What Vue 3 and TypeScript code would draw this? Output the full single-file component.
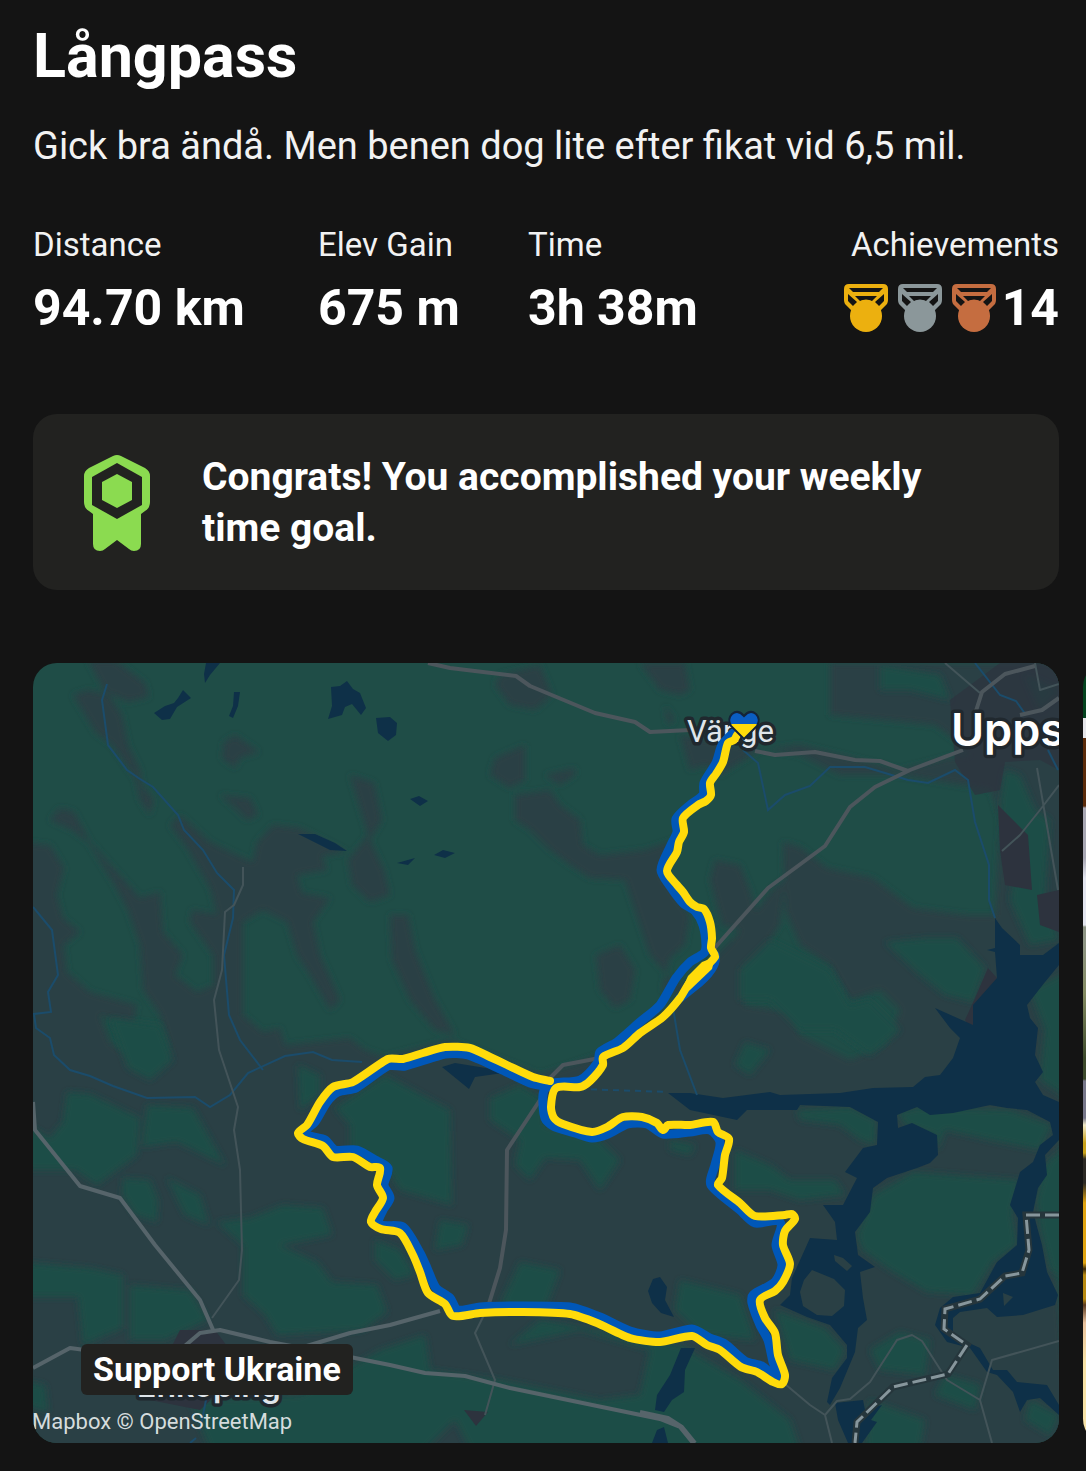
<script setup lang="ts">
interface Stat {
  label: string
  value: string
}

interface Medal {
  name: string
  color: string
}

const stats: Stat[] = [
  { label: 'Distance', value: '94.70 km' },
  { label: 'Elev Gain', value: '675 m' },
  { label: 'Time', value: '3h 38m' },
]

const medals: Medal[] = [
  { name: 'gold', color: '#ecb00f' },
  { name: 'silver', color: '#8b979a' },
  { name: 'bronze', color: '#c56d40' },
]

// Turns a list of "x,y" points into a gently rounded curve through all of them.
function smooth(list: string): string {
  const points = list.split(' ').map((pair) => pair.split(',').map(Number))
  let path = `M${points[0][0]} ${points[0][1]}`
  for (let i = 0; i < points.length - 1; i++) {
    const before = points[Math.max(i - 1, 0)]
    const from = points[i]
    const to = points[i + 1]
    const after = points[Math.min(i + 2, points.length - 1)]
    const reach = Math.min(Math.hypot(to[0] - from[0], to[1] - from[1]) / 4, 7)
    const unit = (a: number[], b: number[]): number[] => {
      const length = Math.hypot(b[0] - a[0], b[1] - a[1]) || 1
      return [(b[0] - a[0]) / length, (b[1] - a[1]) / length]
    }
    const out = unit(before, to)
    const into = unit(from, after)
    path += `C${from[0] + out[0] * reach} ${from[1] + out[1] * reach} ${to[0] - into[0] * reach} ${to[1] - into[1] * reach} ${to[0]} ${to[1]}`
  }
  return path
}

const routeYellow = smooth(
  '737,735 734,740 728,743 723,762 716,774 710,783 711,795 706,801 698,805 683,818 684,832 679,842 677,852 667,871 677,885 683,892 690,902 697,907 704,909 710,922 712,938 711,948 715,957 690,982 680,998 663,1017 640,1033 623,1048 603,1057 603,1065 590,1081 580,1087 556,1088 551,1107 554,1118 563,1124 592,1132 607,1127 623,1117 642,1117 657,1123 663,1130 668,1125 690,1125 713,1122 718,1132 729,1139 725,1155 722,1178 718,1185 740,1203 755,1216 785,1215 792,1214 795,1219 785,1231 783,1245 790,1264 783,1282 775,1291 760,1300 765,1318 775,1333 778,1355 785,1375 782,1384 773,1382 757,1372 741,1367 720,1350 707,1345 692,1336 660,1342 630,1338 597,1323 570,1314 523,1312 480,1313 453,1316 445,1304 428,1293 420,1272 413,1255 400,1233 381,1229 371,1222 375,1212 383,1198 377,1185 380,1168 370,1167 353,1157 333,1157 323,1146 303,1139 298,1133 307,1125 320,1102 333,1087 353,1082 388,1059 403,1059 423,1053 445,1047 470,1048 490,1057 507,1065 533,1077 550,1081',
)

const routeBlue = smooth(
  '733,733 722,745 716,763 704,783 703,795 690,805 676,819 677,832 671,845 661,870 670,886 683,903 695,911 703,925 706,945 704,953 690,962 676,978 660,1005 640,1022 617,1042 600,1052 598,1062 580,1080 548,1084 543,1095 545,1118 553,1126 575,1133 592,1138 608,1134 628,1124 647,1124 663,1134 690,1132 710,1130 720,1142 715,1165 711,1185 740,1210 755,1223 780,1222 776,1245 782,1265 775,1282 753,1295 752,1303 760,1325 768,1340 773,1362 777,1376 762,1366 745,1361 725,1344 710,1338 692,1329 660,1336 630,1331 600,1317 570,1307 523,1306 480,1307 458,1310 450,1298 436,1288 427,1268 420,1253 403,1227 379,1224 383,1210 390,1198 384,1185 388,1168 375,1160 357,1150 335,1150 325,1140 305,1133 315,1122 327,1102 338,1092 356,1088 388,1066 405,1066 445,1054 468,1055 500,1069 530,1083 550,1087',
)
</script>

<template>
  <main class="activity">
    <header class="intro">
      <h1 class="title">Långpass</h1>
      <p class="note">Gick bra ändå. Men benen dog lite efter fikat vid 6,5 mil.</p>
    </header>

    <dl class="stats">
      <div v-for="stat in stats" :key="stat.label" class="stat">
        <dt>{{ stat.label }}</dt>
        <dd>{{ stat.value }}</dd>
      </div>
      <div class="stat achievements">
        <dt>Achievements</dt>
        <dd>
          <span class="medals">
            <svg
              v-for="medal in medals"
              :key="medal.name"
              class="medal"
              viewBox="0 0 44 48"
              :fill="medal.color"
              aria-hidden="true"
            >
              <path
                fill-rule="evenodd"
                d="M5 0H39Q44 0 44 5V16Q44 18 43 20L36 27H8L1 20Q0 18 0 16V5Q0 0 5 0ZM5 4L9 8H35L39 4ZM11 12L16 17Q22 14 28 17L33 12ZM4 10V17L9 22L13 18ZM40 10L31 18L35 22L40 17Z"
              />
              <circle cx="22" cy="32" r="16" />
            </svg>
          </span>
          <span>14</span>
        </dd>
      </div>
    </dl>

    <section class="goal">
      <svg class="ribbon" viewBox="0 0 66 96" aria-hidden="true">
        <path
          fill="#8bdb50"
          d="M29 1Q33 -1 37 1L61 13Q66 16 66 21V47Q66 53 61 56L57 59V89Q57 96 50 96Q47 96 45 94L33 85L21 94Q19 96 16 96Q9 96 9 89V59L5 56Q0 53 0 47V21Q0 16 5 13Z"
        />
        <path fill="#222220" d="M33 8L58 22V50L33 64L8 50V22Z" />
        <path fill="#8bdb50" d="M33 19L48 27V45L33 53L18 45V27Z" />
      </svg>
      <p>Congrats! You accomplished your weekly time goal.</p>
    </section>

    <section class="carousel" aria-label="Activity media">
      <figure class="map">
        <svg class="map-art" viewBox="33 663 1026 780" role="img" aria-label="Route map">
          <defs>
            <filter id="soften" x="0" y="0" width="1" height="1">
              <feGaussianBlur stdDeviation="3" />
            </filter>
            <clipPath id="heart-shape">
              <path d="M744 739L731 726Q727 719 732 714Q738 709 744 716Q750 709 756 714Q761 719 757 726Z" />
            </clipPath>
          </defs>
          <rect x="33" y="663" width="1026" height="780" fill="#1f4d47" />

          <!-- open land -->
          <g fill="#2c3f45" filter="url(#soften)">
            <path d="M20 842L50 845L64 868L57 895L63 918L80 932L64 945L67 972L90 992L137 1005L133 1025L100 1015L110 1042L133 1060L170 1050L160 1015L143 990L140 945L128 910L113 882L88 842L72 830L50 820L60 808L74 812L90 842L115 870L140 898L160 892L163 932L183 955L175 975L197 992L213 985L213 955L190 922L192 910L217 914L210 888L187 848L170 825L180 815L210 842L237 855L253 862L257 842L273 825L300 828L347 852L322 856L327 870L297 875L302 893L330 898L313 922L320 955L340 1000L330 1010L310 975L297 955L287 922L263 910L243 922L243 1015L263 1032L280 1028L285 1045L350 1038L365 1050L385 1057L450 1040L540 1075L600 1055L640 1030L665 1010L712 960L740 932L773 888L785 880L780 925L770 940L775 960L745 965L745 1005L790 1012L800 1035L850 1060L885 1045L900 1010L880 990L850 1000L830 965L800 945L785 910L783 842L800 847L827 868L873 878L913 908L967 915L995 915L1000 820L985 770L955 740L935 725L830 715L830 663L1070 663L1070 940L1059 1160L1040 1170L1059 1300L1070 1450L20 1450Z" />
            <path d="M88 660H115L145 683L149 697L128 702L108 693L122 715L128 745L140 770L142 785L154 800L150 815L140 800L135 778L112 745L96 733L73 695L88 690L106 694Z" />
            <path d="M224 742L235 735L259 752L240 758L235 768L222 758ZM220 795L250 798L258 815L247 820L235 808Z" />
            <path d="M350 775L374 783L382 820L370 840L384 870L390 895L370 902L352 885L348 860L368 835Z" />
            <path d="M500 675L540 665L552 695L535 710L510 705L495 685Z" />
            <path d="M640 663H685L690 690L680 695L660 690ZM665 705L675 720L668 725Z" />
            <path d="M495 758L525 745L525 780L510 788L490 775ZM545 775L575 768L575 775L560 785ZM515 795L550 790L560 805L580 820L583 845L600 855L645 850L675 840L662 875L690 915L685 945L670 958L662 990L680 995L720 960L760 925L750 890L740 865L715 860L710 880L722 925L740 930L710 970L690 990L670 978L650 955L640 925L625 880L590 878L570 865L550 850L530 830L515 820Z" />
            <path d="M596 955L620 945L635 970L630 1000L615 1008L600 990Z" />
            <path d="M680 735L740 745L800 755L840 775L900 775L960 785L1000 790L990 755L950 757L900 770L800 745L760 750L720 775L705 765L690 770Z" />
            <path d="M390 915L408 915L415 950L435 1000L455 1035L435 1030L410 1000L392 960Z" />
          </g>

          <!-- woodland -->
          <g fill="#1f4d47" filter="url(#soften)">
            <path d="M110 1018L160 1025L173 1060L150 1080L128 1068ZM67 1092L90 1094L140 1118L137 1155L97 1185L75 1170L28 1170V1125L50 1138L63 1122Z" />
            <path d="M147 1105L193 1108L225 1165L177 1142L142 1147ZM123 1178L150 1180L158 1200L157 1222L135 1215L122 1195ZM167 1178L200 1195L209 1225L185 1215Z" />
            <path d="M217 1222L250 1218L283 1205L323 1208L332 1235L280 1245L317 1262L332 1282L377 1285L387 1312L363 1330L277 1335L265 1315L243 1295L243 1245Z" />
            <path d="M20 1262L90 1268L123 1275L123 1328L83 1345L78 1297L20 1297ZM130 1285L190 1290L208 1320L165 1340L130 1340ZM20 1380L45 1385L48 1412L20 1405Z" />
            <path d="M210 1450L190 1400L300 1395L380 1350L425 1335L430 1370L500 1380L600 1400L640 1395L650 1350L580 1330L510 1345L540 1320L600 1330L680 1345L740 1380L790 1420L800 1450H470L455 1420L425 1450Z" />
            <path d="M298 1065L320 1075L320 1095L300 1110ZM335 1108L385 1075L450 1110L452 1205L400 1190L385 1165L350 1155L350 1125Z" />
            <path d="M415 1105L440 1108L432 1120L418 1115ZM490 1098L520 1085L545 1100L545 1125L600 1140L620 1160L600 1190L580 1160L545 1158L530 1180L515 1165L520 1140L490 1120Z" />
            <path d="M440 1220L468 1225L462 1245L435 1250ZM520 1262L560 1270L545 1310L500 1305ZM680 1280L740 1295L755 1340L700 1335L675 1310Z" />
            <path d="M375 1240L400 1250L415 1275L395 1280L375 1260ZM735 1150L770 1165L790 1180L835 1180L845 1195L800 1200L770 1190L735 1190ZM670 1140L695 1145L690 1155L670 1150Z" />
            <path d="M797 1110L850 1107L876 1120L875 1145L860 1140L840 1125L800 1120ZM897 1112L920 1107L1010 1110L1052 1125L1040 1150L990 1140L945 1130L938 1150L935 1135L905 1125Z" />
            <path d="M913 1172L1020 1180L1012 1212L1017 1245L993 1262L973 1295L927 1292L890 1270L862 1250L857 1235L873 1195Z" />
            <path d="M1048 1160L1070 1145V1280L1050 1270L1040 1230L1036 1200ZM775 1310L825 1328L845 1350L835 1370L790 1360ZM900 1332L930 1340L925 1375L880 1370L870 1350ZM945 1375L980 1385L975 1410L935 1395ZM870 1400L925 1420L920 1450H865ZM1030 1400L1059 1415L1050 1435L1025 1420Z" />
            <path d="M927 938L957 938L985 968L973 1002L945 995L920 975L885 942ZM740 970L770 940L830 970L850 1005L870 1000L900 1030L870 1055L835 1030L800 1030L770 1000L740 1000ZM745 1042L770 1050L750 1075L735 1065Z" />
            <path d="M1005 770L1020 775L1035 810L1050 820L1045 900L1059 940L1030 945L1010 900L1015 870L1003 850L1000 800ZM1030 990L1070 970V1100L1040 1080L1045 1030ZM1025 675L1059 690L1040 710Z" />
            <path d="M880 665L940 675L950 700L910 690L880 690Z" />
          </g>

          <!-- built-up areas -->
          <g fill="#2d333e">
            <path d="M950 700L1000 663H1059V770L1040 760L1005 762L1000 790L975 795L955 762Z" opacity=".7" />
            <path d="M998 805L1028 835L1032 890L1005 885L1000 850ZM1037 895L1059 890V932L1040 925Z" />
            <path d="M988 968L997 978L985 1010L970 1028L965 1020L975 998Z" />
            <path d="M464 1410L488 1412L476 1426ZM180 1330L215 1330L230 1350H170ZM140 1398L215 1396L200 1410Z" />
          </g>

          <!-- lakes and bays -->
          <g fill="#0e3048">
            <path
              fill-rule="evenodd"
              d="M995 918L1002 928L1020 945L1020 955L1043 955L1059 943V965L1045 982L1027 1005L1030 1018L1038 1028L1035 1055L1043 1072L1035 1082L1043 1095L1059 1102V1140L1045 1155L1047 1175L1038 1188L1033 1212L1042 1245L1047 1272L1058 1295L1055 1305L1023 1315L997 1317L987 1308L960 1312L953 1318L953 1332L967 1342L980 1348L993 1370L1007 1370L1017 1382L1047 1385L1059 1405V1415L1040 1398L1027 1400L1020 1412L1013 1392L997 1375L987 1372L970 1348L947 1342L935 1325L940 1308L953 1297L980 1293L997 1262L1017 1245L1018 1218L1010 1205L1020 1172L1033 1162L1040 1145L1053 1135L1050 1122L1027 1110L1007 1108L990 1105L953 1113L930 1115L917 1107L897 1115L898 1128L912 1123L937 1135L938 1155L930 1163L917 1168L887 1178L873 1188L870 1212L855 1232L858 1255L875 1267L860 1272L863 1298L867 1320L858 1328L855 1352L840 1388L830 1405L827 1402L832 1378L847 1358L847 1345L830 1325L807 1317L780 1305L790 1295L792 1278L810 1238L837 1240L835 1222L823 1205L843 1205L857 1178L845 1172L863 1148L877 1145L878 1122L850 1107L800 1105L797 1110L747 1110L737 1120L690 1110L668 1093L690 1093L723 1098L770 1092L780 1095L840 1093L873 1088L913 1087L925 1077L940 1075L953 1058L960 1038L950 1028L935 1008L973 1025L973 1005L997 978L995 952L987 950L995 948ZM812 1270L834 1279L845 1290L844 1306L832 1316L817 1315L803 1306L800 1292L804 1280ZM834 1255L843 1258L852 1266L847 1271L835 1261ZM1003 1293L1013 1297L1004 1306Z"
            />
            <path d="M835 1403L863 1400L865 1410L882 1405L871 1420L877 1422L862 1443H848L838 1420Z" />
            <path d="M206 663H220L210 675L205 683L204 674ZM154 713L165 706L174 703L178 698L183 690L191 698L177 707L170 719L162 720ZM234 692L240 692L238 706L233 718L229 716L233 706Z" />
            <path d="M331 687L340 686L347 681L353 689L360 693L366 708L361 715L352 704L345 707L342 715L328 719L332 706ZM376 718L390 717L397 723L396 735L388 741L378 733Z" />
            <path d="M298 834L315 834L335 843L347 851L330 850ZM410 799L419 796L428 801L420 806ZM397 863L415 858L408 865ZM434 855L443 850L455 853L445 858Z" />
            <path d="M442 1067L455 1063L510 1072L475 1077L469 1089ZM653 1279L660 1277L667 1287L665 1300L674 1317L661 1313L652 1303L648 1291ZM681 1348H695L685 1370L684 1392L672 1400L664 1412L655 1410L657 1395L670 1375ZM657 1430L664 1427L668 1443H652Z" />
          </g>

          <!-- streams -->
          <g class="stream">
            <path d="M107 684L102 700L108 745L127 770L140 779L153 787L178 815L184 830L203 850L217 873L234 890L233 918L224 955L229 1015L240 1040L263 1070M33 907L52 930L58 975L48 992L51 1012L34 1014L36 1028L50 1038L54 1055L70 1070L90 1076L113 1086L147 1098L195 1097L210 1107L230 1095L248 1073L285 1056L313 1052L332 1060L362 1062" />
            <path d="M743 750L758 763L768 810L785 795L810 786L830 767L865 767L885 773L908 780L928 783L955 770L968 780L975 822L989 865L989 900L995 918M975 663L1000 695L1016 701L1026 715M1048 750L1058 770M673 1008L680 1050L697 1095M206 1400L200 1430M190 1443L196 1438" />
            <path d="M580 1089L668 1092" stroke-dasharray="6 5" />
          </g>

          <!-- roads -->
          <g class="minor-road">
            <path d="M243 867V885L234 905L225 912L222 970L214 1000L219 1050L238 1107L234 1130L240 1170L242 1250L239 1280L212 1318M785 1384L810 1405L825 1415L832 1443M825 1415L837 1401L850 1399L870 1382L897 1340L912 1335L922 1341L947 1380L980 1400L992 1360L1059 1341M980 1400L992 1443" />
            <path d="M1037 768L1058 890M1059 785L1040 810L1020 835L1002 851M485 1313L475 1333L495 1380L485 1415M945 663L980 693M1035 663L1040 690L1059 684" />
          </g>
          <g class="road">
            <path d="M428 663L450 668L516 676L530 686L595 713L635 722L650 732L690 730M755 751L775 755L815 752L855 760L880 761L908 771M712 951L768 888L825 846L850 807L875 787L910 770L963 750M975 714L982 692L1005 674L1035 666M1020 715L1042 710L1059 698M610 1056L563 1065L550 1078L540 1100L507 1150L506 1230L500 1268L487 1310" />
          </g>
          <g class="highway">
            <path d="M33 1102L35 1130L80 1186L120 1198L155 1245L200 1300L214 1332M33 1368L70 1348L100 1352M180 1350L200 1333L220 1330L270 1342L350 1357L390 1365L425 1373L465 1376L510 1388L660 1419L680 1427L693 1443M300 1348L350 1333L390 1325L440 1311M640 1412L668 1418L682 1427L695 1443" />
          </g>
          <path class="boundary-shadow" d="M1059 1215H1026L1029 1250L1022 1273L1005 1276L980 1299L945 1309L944 1329L967 1345L948 1374L893 1387L857 1422L855 1443" />
          <path class="boundary" d="M1059 1215H1026L1029 1250L1022 1273L1005 1276L980 1299L945 1309L944 1329L967 1345L948 1374L893 1387L857 1422L855 1443" />

          <g class="place-names">
            <text x="687" y="742" font-size="31">Vänge</text>
            <text class="city" x="951" y="746" font-size="45">Upps</text>
            <text class="town" x="137" y="1397" font-size="32">Enköping</text>
          </g>

          <path class="route blue" :d="routeBlue" />
          <path class="route blue" d="M715 955Q718 966 700 982L680 998" />
          <path class="route yellow" :d="routeYellow" />
          <path fill="#ffdb0a" d="M715 957L702 962L688 976L678 998L690 990L712 969Z" />

          <g clip-path="url(#heart-shape)">
            <rect x="728" y="710" width="32" height="14" fill="#0a5dc2" />
            <rect x="728" y="724" width="32" height="17" fill="#ffdb0a" />
          </g>
          <path
            d="M744 739L731 726Q727 719 732 714Q738 709 744 716Q750 709 756 714Q761 719 757 726Z"
            fill="none"
            stroke="#142438"
            stroke-width="2"
          />
          <text class="credit" x="32" y="1429" font-size="22">Mapbox © OpenStreetMap</text>
        </svg>
        <a class="support" href="#support">Support Ukraine</a>
      </figure>
      <div class="photo" role="img" aria-label="Next photo"></div>
    </section>
  </main>
</template>

<style>
body {
  margin: 0;
  background: #141414;
}
</style>

<style scoped>
.activity {
  padding: 20px 0 28px 33px;
  overflow: hidden;
  background: #141414;
  color: #fff;
  font-family: Roboto, 'Liberation Sans', sans-serif;
}

.intro,
.stats,
.goal {
  margin-right: 27px;
}

.title {
  margin: 0;
  font-size: 61px;
  line-height: 72px;
  font-weight: 700;
}

.note {
  margin: 28px 0 0;
  color: #f2f2f2;
  font-size: 38px;
  line-height: 52px;
}

.stats {
  display: grid;
  grid-template-columns: 285fr 210fr 200fr 331fr;
  margin-top: 53px;
  margin-bottom: 0;
}

.stat dt {
  color: #f2f2f2;
  font-size: 33px;
  line-height: 40px;
}

.stat dd {
  display: flex;
  align-items: center;
  gap: 6px;
  margin: 13px 0 0;
  font-size: 50px;
  line-height: 60px;
  font-weight: 700;
  white-space: nowrap;
}

.achievements {
  text-align: right;
}

.achievements dd {
  justify-content: flex-end;
}

.medals {
  display: flex;
  gap: 10px;
}

.medal {
  width: 44px;
  height: 48px;
}

.goal {
  display: flex;
  align-items: center;
  gap: 52px;
  margin-top: 76px;
  padding: 38px 80px 36px 51px;
  border-radius: 24px;
  background: #222220;
}

.ribbon {
  flex: none;
  width: 66px;
  height: 96px;
}

.goal p {
  margin: 0;
  font-size: 39px;
  line-height: 51px;
  font-weight: 700;
}

.carousel {
  display: flex;
  gap: 24px;
  margin-top: 73px;
}

.map {
  position: relative;
  flex: none;
  width: calc(100% - 27px);
  margin: 0;
  border-radius: 24px;
  overflow: hidden;
}

.map-art {
  display: block;
  width: 100%;
  height: auto;
}

.stream {
  fill: none;
  stroke: #1b4c6b;
  stroke-width: 2;
}

.minor-road,
.road,
.highway {
  fill: none;
  stroke-linejoin: round;
}

.minor-road {
  stroke: #435459;
  stroke-width: 2;
}

.road {
  stroke: #4c565c;
  stroke-width: 4;
}

.highway {
  stroke: #56646a;
  stroke-width: 4;
}

.boundary-shadow {
  fill: none;
  stroke: #26363c;
  stroke-width: 7;
}

.boundary {
  fill: none;
  stroke: #87969c;
  stroke-width: 3;
  stroke-dasharray: 14 5;
}

.place-names text {
  fill: #dfe5ea;
  stroke: #20282e;
  stroke-width: 7;
  stroke-linejoin: round;
  paint-order: stroke;
}

.place-names .city {
  fill: #fff;
  font-family: Inter, sans-serif;
  font-weight: 600;
}

.place-names .town {
  font-family: Inter, sans-serif;
  font-weight: 600;
}

.route {
  fill: none;
  stroke-linecap: round;
  stroke-linejoin: round;
}

.route.blue {
  stroke: #0057b8;
  stroke-width: 9;
}

.route.yellow {
  stroke: #ffdb0a;
  stroke-width: 8;
}

.credit {
  fill: #d5dcdd;
}

.support {
  position: absolute;
  left: 48px;
  bottom: 48px;
  padding: 6px 12px;
  border-radius: 6px;
  background: #222220;
  color: #fff;
  font-size: 34px;
  line-height: 39px;
  font-weight: 700;
  text-decoration: none;
}

.photo {
  flex: none;
  width: 100%;
  border-radius: 24px;
  background: linear-gradient(
    #04431f 55px,
    #e6e6ea 55px 75px,
    #5b2b0a 75px 143px,
    #a9a8b4 145px 195px,
    #e4e6f0 215px 262px,
    #8e9585 264px 280px,
    #848b62 330px,
    #3d4a2c 395px 416px,
    #77778a 418px 455px,
    #f0e9c8 462px,
    #c9a21b 480px 490px,
    #2c2924 496px 520px,
    #e0a412 540px 600px,
    #3a2708 606px,
    #b88a12 612px 636px,
    #5b3b22 642px,
    #e9c3a0 660px,
    #f7e3a8 700px
  );
}
</style>
